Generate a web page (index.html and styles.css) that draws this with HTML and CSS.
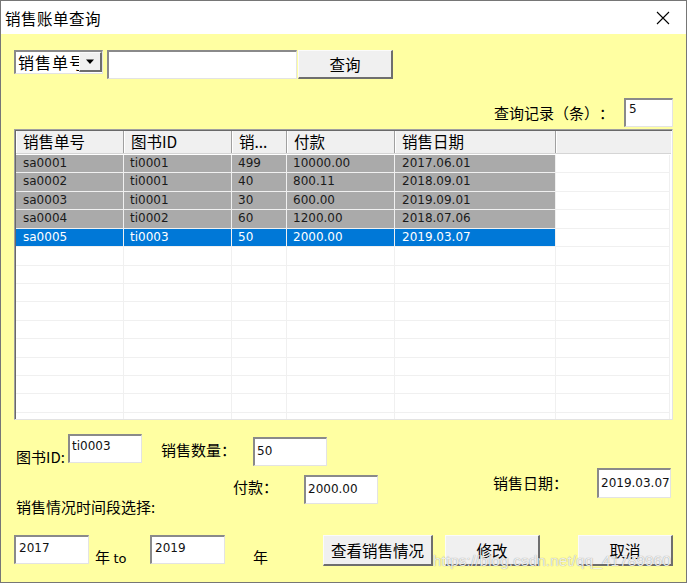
FILE: index.html
```html
<!DOCTYPE html>
<html lang="zh-CN">
<head>
<meta charset="utf-8">
<title>销售账单查询</title>
<link rel="stylesheet" href="styles.css">
</head>
<body>
<div class="window">
  <div class="titlebar">
    <span class="title">销售账单查询</span>
    <svg class="close" width="14" height="14" viewBox="0 0 14 14"><path d="M1 1 L13 13 M13 1 L1 13" stroke="#000" stroke-width="1.1" fill="none"/></svg>
  </div>
  <div class="content">
    <div class="row-search">
      <div class="select">
        <span class="select-text">销售单号</span>
        <span class="select-btn"><svg width="10" height="6" viewBox="0 0 10 6"><path d="M1 0.5 H9 L5 5 Z" fill="#000"/></svg></span>
      </div>
      <div class="field search-field"></div>
      <div class="btn btn-query">查询</div>
    </div>
    <div class="row-count">
      <span class="lbl">查询记录（条）：</span>
      <div class="field count-field">5</div>
    </div>
    <div class="grid">
      <div class="grid-head">
        <div class="hc c1">销售单号</div>
        <div class="hc c2">图书ID</div>
        <div class="hc c3">销...</div>
        <div class="hc c4">付款</div>
        <div class="hc c5">销售日期</div>
        <div class="hc c6"></div>
      </div>
      <div class="grid-body">
        <div class="gr data"><div class="gc c1">sa0001</div><div class="gc c2">ti0001</div><div class="gc c3">499</div><div class="gc c4">10000.00</div><div class="gc c5">2017.06.01</div><div class="gc c6"></div></div>
        <div class="gr data"><div class="gc c1">sa0002</div><div class="gc c2">ti0001</div><div class="gc c3">40</div><div class="gc c4">800.11</div><div class="gc c5">2018.09.01</div><div class="gc c6"></div></div>
        <div class="gr data"><div class="gc c1">sa0003</div><div class="gc c2">ti0001</div><div class="gc c3">30</div><div class="gc c4">600.00</div><div class="gc c5">2019.09.01</div><div class="gc c6"></div></div>
        <div class="gr data"><div class="gc c1">sa0004</div><div class="gc c2">ti0002</div><div class="gc c3">60</div><div class="gc c4">1200.00</div><div class="gc c5">2018.07.06</div><div class="gc c6"></div></div>
        <div class="gr data sel"><div class="gc c1">sa0005</div><div class="gc c2">ti0003</div><div class="gc c3">50</div><div class="gc c4">2000.00</div><div class="gc c5">2019.03.07</div><div class="gc c6"></div></div>
        <div class="gr"><div class="gc c1"></div><div class="gc c2"></div><div class="gc c3"></div><div class="gc c4"></div><div class="gc c5"></div><div class="gc c6"></div></div>
        <div class="gr"><div class="gc c1"></div><div class="gc c2"></div><div class="gc c3"></div><div class="gc c4"></div><div class="gc c5"></div><div class="gc c6"></div></div>
        <div class="gr"><div class="gc c1"></div><div class="gc c2"></div><div class="gc c3"></div><div class="gc c4"></div><div class="gc c5"></div><div class="gc c6"></div></div>
        <div class="gr"><div class="gc c1"></div><div class="gc c2"></div><div class="gc c3"></div><div class="gc c4"></div><div class="gc c5"></div><div class="gc c6"></div></div>
        <div class="gr"><div class="gc c1"></div><div class="gc c2"></div><div class="gc c3"></div><div class="gc c4"></div><div class="gc c5"></div><div class="gc c6"></div></div>
        <div class="gr"><div class="gc c1"></div><div class="gc c2"></div><div class="gc c3"></div><div class="gc c4"></div><div class="gc c5"></div><div class="gc c6"></div></div>
        <div class="gr"><div class="gc c1"></div><div class="gc c2"></div><div class="gc c3"></div><div class="gc c4"></div><div class="gc c5"></div><div class="gc c6"></div></div>
        <div class="gr"><div class="gc c1"></div><div class="gc c2"></div><div class="gc c3"></div><div class="gc c4"></div><div class="gc c5"></div><div class="gc c6"></div></div>
        <div class="gr"><div class="gc c1"></div><div class="gc c2"></div><div class="gc c3"></div><div class="gc c4"></div><div class="gc c5"></div><div class="gc c6"></div></div>
        <div class="gr"><div class="gc c1"></div><div class="gc c2"></div><div class="gc c3"></div><div class="gc c4"></div><div class="gc c5"></div><div class="gc c6"></div></div>
      </div>
    </div>
    <div class="row-a">
      <span class="lbl lbl-bookid">图书ID:</span>
      <div class="field f-bookid">ti0003</div>
      <span class="lbl lbl-qty">销售数量：</span>
      <div class="field f-qty">50</div>
    </div>
    <div class="row-b">
      <span class="lbl lbl-period">销售情况时间段选择:</span>
      <span class="lbl lbl-pay">付款：</span>
      <div class="field f-pay">2000.00</div>
      <span class="lbl lbl-date">销售日期：</span>
      <div class="field f-date">2019.03.07</div>
    </div>
    <div class="row-c">
      <div class="field f-year">2017</div>
      <span class="lbl lbl-to">年 <span class="latin">to</span></span>
      <div class="field f-year">2019</div>
      <span class="lbl lbl-year">年</span>
      <div class="btn btn-view">查看销售情况</div>
      <div class="btn btn-edit">修改</div>
      <div class="btn btn-cancel">取消</div>
    </div>
  </div>
  <div class="watermark">https://blog.csdn.net/qq_41789960</div>
</div>
</body>
</html>
```

FILE: styles.css
```css
* { box-sizing: border-box; margin: 0; padding: 0; }

body {
  width: 687px;
  height: 583px;
  overflow: hidden;
  font-family: "Noto Sans CJK SC", sans-serif;
  color: #000;
  text-spacing-trim: space-all;
}

.window {
  position: relative;
  width: 687px;
  height: 583px;
  border: 1px solid #767676;
  background: #ffffa2;
  display: flex;
  flex-direction: column;
}

.titlebar {
  flex: none;
  height: 33px;
  background: #fff;
  display: flex;
  align-items: center;
  justify-content: space-between;
  padding: 0 16px 0 4px;
}

.title {
  font-size: 15.5px;
  line-height: 20px;
  letter-spacing: 0.5px;
}

.content {
  flex: 1;
  padding: 0 13px;
}

.lbl {
  font-size: 15px;
  line-height: 18px;
  white-space: nowrap;
  flex: none;
}

.latin {
  font-family: "DejaVu Sans", sans-serif;
  font-size: 13px;
}

/* sunken edit boxes */
.field {
  flex: none;
  background: #fff;
  border-style: solid;
  border-width: 2px 1px 1px 2px;
  border-color: #8a8a8a #e3e3e3 #e3e3e3 #8a8a8a;
  font-family: "DejaVu Sans", sans-serif;
  font-size: 12px;
  line-height: 16px;
  padding: 3px 2px 0 2px;
  color: #111;
  white-space: nowrap;
  overflow: hidden;
}

/* raised push buttons */
.btn {
  flex: none;
  background: #f0f0f0;
  border-style: solid;
  border-width: 1px 2px 2px 1px;
  border-color: #fbfbfb #6e6e6e #6e6e6e #fbfbfb;
  font-size: 15.5px;
  line-height: 18px;
  display: flex;
  align-items: center;
  justify-content: center;
}

/* search row */
.row-search {
  margin-top: 16px;
  display: flex;
  align-items: flex-start;
  height: 29px;
}

.select {
  width: 89px;
  height: 24px;
  background: #fff;
  border-style: solid;
  border-width: 2px 1px 1px 2px;
  border-color: #8a8a8a #e3e3e3 #e3e3e3 #8a8a8a;
  display: flex;
  overflow: hidden;
}

.select-text {
  flex: 1;
  min-width: 0;
  overflow: hidden;
  white-space: nowrap;
  font-size: 16px;
  letter-spacing: 1px;
  line-height: 20px;
  padding-left: 2px;
}

.select-btn {
  flex: none;
  width: 23px;
  height: 20px;
  margin-top: 0;
  background: #f0f0f0;
  border-style: solid;
  border-width: 1px 2px 2px 1px;
  border-color: #fbfbfb #6e6e6e #6e6e6e #fbfbfb;
  display: flex;
  align-items: center;
  justify-content: center;
}

.search-field {
  margin-left: 4px;
  width: 190px;
  height: 29px;
}

.btn-query {
  margin-left: 1px;
  width: 95px;
  height: 29px;
}

/* count row */
.row-count {
  margin-top: 19px;
  height: 29px;
  display: flex;
  justify-content: flex-end;
  align-items: center;
}

.row-count .lbl {
  margin-right: 10px;
  margin-top: 1px;
}

.count-field {
  width: 49px;
  height: 29px;
  padding-top: 1px;
  padding-left: 3px;
}

/* list view */
.grid {
  margin-top: 2px;
  height: 291px;
  background: #fff;
  border-style: solid;
  border-width: 1px;
  border-color: #a0a0a0 #e3e3e3 #e3e3e3 #a0a0a0;
  box-shadow: inset 1px 1px 0 #696969;
  padding: 1px 1px 0 1px;
  overflow: hidden;
}

.grid-head {
  display: flex;
  height: 23px;
  background: #f0f0f0;
  border-bottom: 1px solid #d5d5d5;
}

.hc {
  flex: none;
  font-size: 15.5px;
  line-height: 21px;
  padding-left: 7px;
  border-right: 1px solid #a0a0a0;
  box-shadow: inset 1px 0 0 #fff;
  white-space: nowrap;
  overflow: hidden;
}

.hc.c6 { border-right: none; }

.c1 { width: 108px; }
.c2 { width: 108px; }
.c3 { width: 55px; }
.c4 { width: 108px; }
.c5 { width: 161px; }
.c6 { width: 114px; }

.grid-body {
  margin-top: 1px;
}

.gr {
  display: flex;
  height: 18.43px;
}

.gc {
  flex: none;
  height: 100%;
  border-right: 1px solid #f0f0f0;
  border-bottom: 1px solid #f0f0f0;
  font-family: "DejaVu Sans", sans-serif;
  font-size: 12px;
  line-height: 17px;
  padding-left: 6px;
  color: #1a1a1a;
  white-space: nowrap;
  overflow: hidden;
}

.gc.c1 { padding-left: 7px; }
.gc.c5 { padding-left: 7px; }

.data .gc { background: #aaaaaa; }
.data .gc.c6 { background: #fff; }
.data.sel .gc { background: #0078d7; color: #fff; }
.data.sel .gc.c6 { background: #fff; }

/* detail rows */
.row-a {
  margin-top: 14px;
  height: 32px;
  display: flex;
  align-items: flex-start;
}

.lbl-bookid {
  width: 52px;
  margin-left: 2px;
  margin-top: 14px;
}

.f-bookid {
  width: 74px;
  height: 29px;
  padding-top: 2px;
}

.lbl-qty {
  width: 92px;
  margin-left: 19px;
  margin-top: 7px;
}

.f-qty {
  margin-top: 3px;
  width: 74px;
  height: 29px;
  padding-top: 4px;
}

.row-b {
  height: 69px;
  display: flex;
  align-items: flex-start;
}

.lbl-period {
  width: 217px;
  margin-left: 2px;
  margin-top: 32px;
}

.lbl-pay {
  width: 71px;
  margin-top: 12px;
}

.f-pay {
  margin-top: 9px;
  width: 74px;
  height: 29px;
  padding-top: 4px;
}

.lbl-date {
  width: 104px;
  margin-left: 115px;
  margin-top: 8px;
}

.f-date {
  margin-top: 2px;
  width: 74px;
  height: 30px;
  padding-top: 5px;
  padding-left: 2px;
}

.row-c {
  height: 31px;
  display: flex;
  align-items: flex-start;
}

.f-year {
  width: 75px;
  height: 29px;
  padding-top: 3px;
  padding-left: 3px;
}

.lbl-to {
  width: 55px;
  margin-left: 6px;
  margin-top: 13px;
}

.lbl-year {
  width: 70px;
  margin-left: 28px;
  margin-top: 13px;
}

.btn-view {
  width: 110px;
  height: 31px;
}

.btn-edit {
  width: 95px;
  height: 31px;
  margin-left: 12px;
}

.btn-cancel {
  width: 95px;
  height: 31px;
  margin-left: 38px;
}

/* blog watermark overlay */
.watermark {
  position: absolute;
  left: 432px;
  top: 551px;
  font-family: "Liberation Sans", sans-serif;
  font-size: 15.5px;
  line-height: 18px;
  color: rgba(255, 255, 255, 0.85);
  text-shadow: 0 0 1px rgba(0, 0, 0, 0.45);
  white-space: nowrap;
  pointer-events: none;
}
```
